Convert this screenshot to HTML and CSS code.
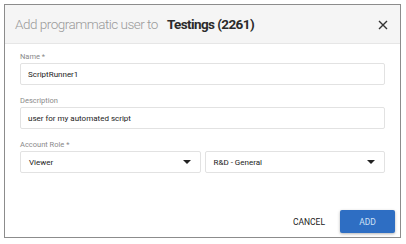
FILE: index.html
```html
<!DOCTYPE html>
<html lang="en">
<head>
  <meta charset="UTF-8" />
  <title>Add programmatic user</title>
  <link rel="stylesheet" href="styles.css">
</head>
<body>
  <div class="dialog">
    <div class="dialog-head">
      <span class="title-lead">Add programmatic user to</span>
      <span class="title-name">Testings (2261)</span>
      <svg class="close" width="10" height="10" viewBox="0 0 10 10">
        <path d="M1 1L9 9M9 1L1 9" stroke="#333" stroke-width="1.4" fill="none"/>
      </svg>
    </div>

    <div class="dialog-body">
      <label class="field">
        <span class="label">Name *</span>
        <span class="box">ScriptRunner1</span>
      </label>
      <label class="field">
        <span class="label">Description</span>
        <span class="box">user for my automated script</span>
      </label>
      <div class="field">
        <span class="label">Account Role *</span>
        <div class="selects">
          <div class="box select">Viewer <span class="caret"></span></div>
          <div class="box select">R&amp;D - General <span class="caret"></span></div>
        </div>
      </div>
    </div>

    <div class="dialog-foot">
      <button class="btn btn-text">CANCEL</button>
      <button class="btn btn-primary">ADD</button>
    </div>
  </div>
</body>
</html>
```

FILE: styles.css
```css
html, body {
  margin: 0; padding: 0; background: #fff;
  font-family: Roboto, "Liberation Sans", sans-serif;
}

body { padding: 4px 0 0 4px; }

.dialog {
  width: 395px; height: 232px;
  border: 1px solid #8c8c8c;
  display: flex; flex-direction: column;
  background: #fff;
}

.dialog-head {
  height: 38px; flex: none;
  background: #f5f5f5; border-bottom: 1px solid #e6e6e6;
  display: flex; align-items: center;
  padding: 0 12px 0 10px;
}
.title-lead { font-size: 13.5px; font-weight: 300; color: #9a9a9a; letter-spacing: -0.5px; }
.title-name { font-size: 13.5px; font-weight: 700; color: #2b2b2b; margin-left: 9px; letter-spacing: -0.6px; }
.close { margin-left: auto; margin-top: 1px; }

.dialog-body { padding: 8px 15px 0; }

.field { display: block; margin-bottom: 11px; }
.label {
  display: block; font-size: 7.5px; color: #8a8a8a;
  line-height: 10px; margin-bottom: 1px;
}
.box {
  display: flex; align-items: center; box-sizing: border-box;
  height: 22px; padding: 0 7px;
  border: 1px solid #e2e2e2; border-radius: 2px;
  font-size: 8px; color: #222;
}

.selects { display: flex; gap: 4px; }
.select { flex: 1; padding: 0 9px 0 8px; }
.caret {
  margin-left: auto; width: 0; height: 0;
  border-left: 4px solid transparent; border-right: 4px solid transparent;
  border-top: 4px solid #222;
}

.dialog-foot {
  margin-top: auto; display: flex; justify-content: flex-end; align-items: center;
  gap: 15px; padding: 0 5px 4px 0;
}
.btn {
  font-family: inherit; font-size: 8.5px; border: none; cursor: pointer;
  height: 23px; border-radius: 2px;
}
.btn-text { background: none; color: #222; padding: 0; }
.btn-primary {
  width: 55px; background: #2e6ec3; color: #cfe0f5;
  box-shadow: 0 1px 3px rgba(0,0,0,0.3);
}
```
